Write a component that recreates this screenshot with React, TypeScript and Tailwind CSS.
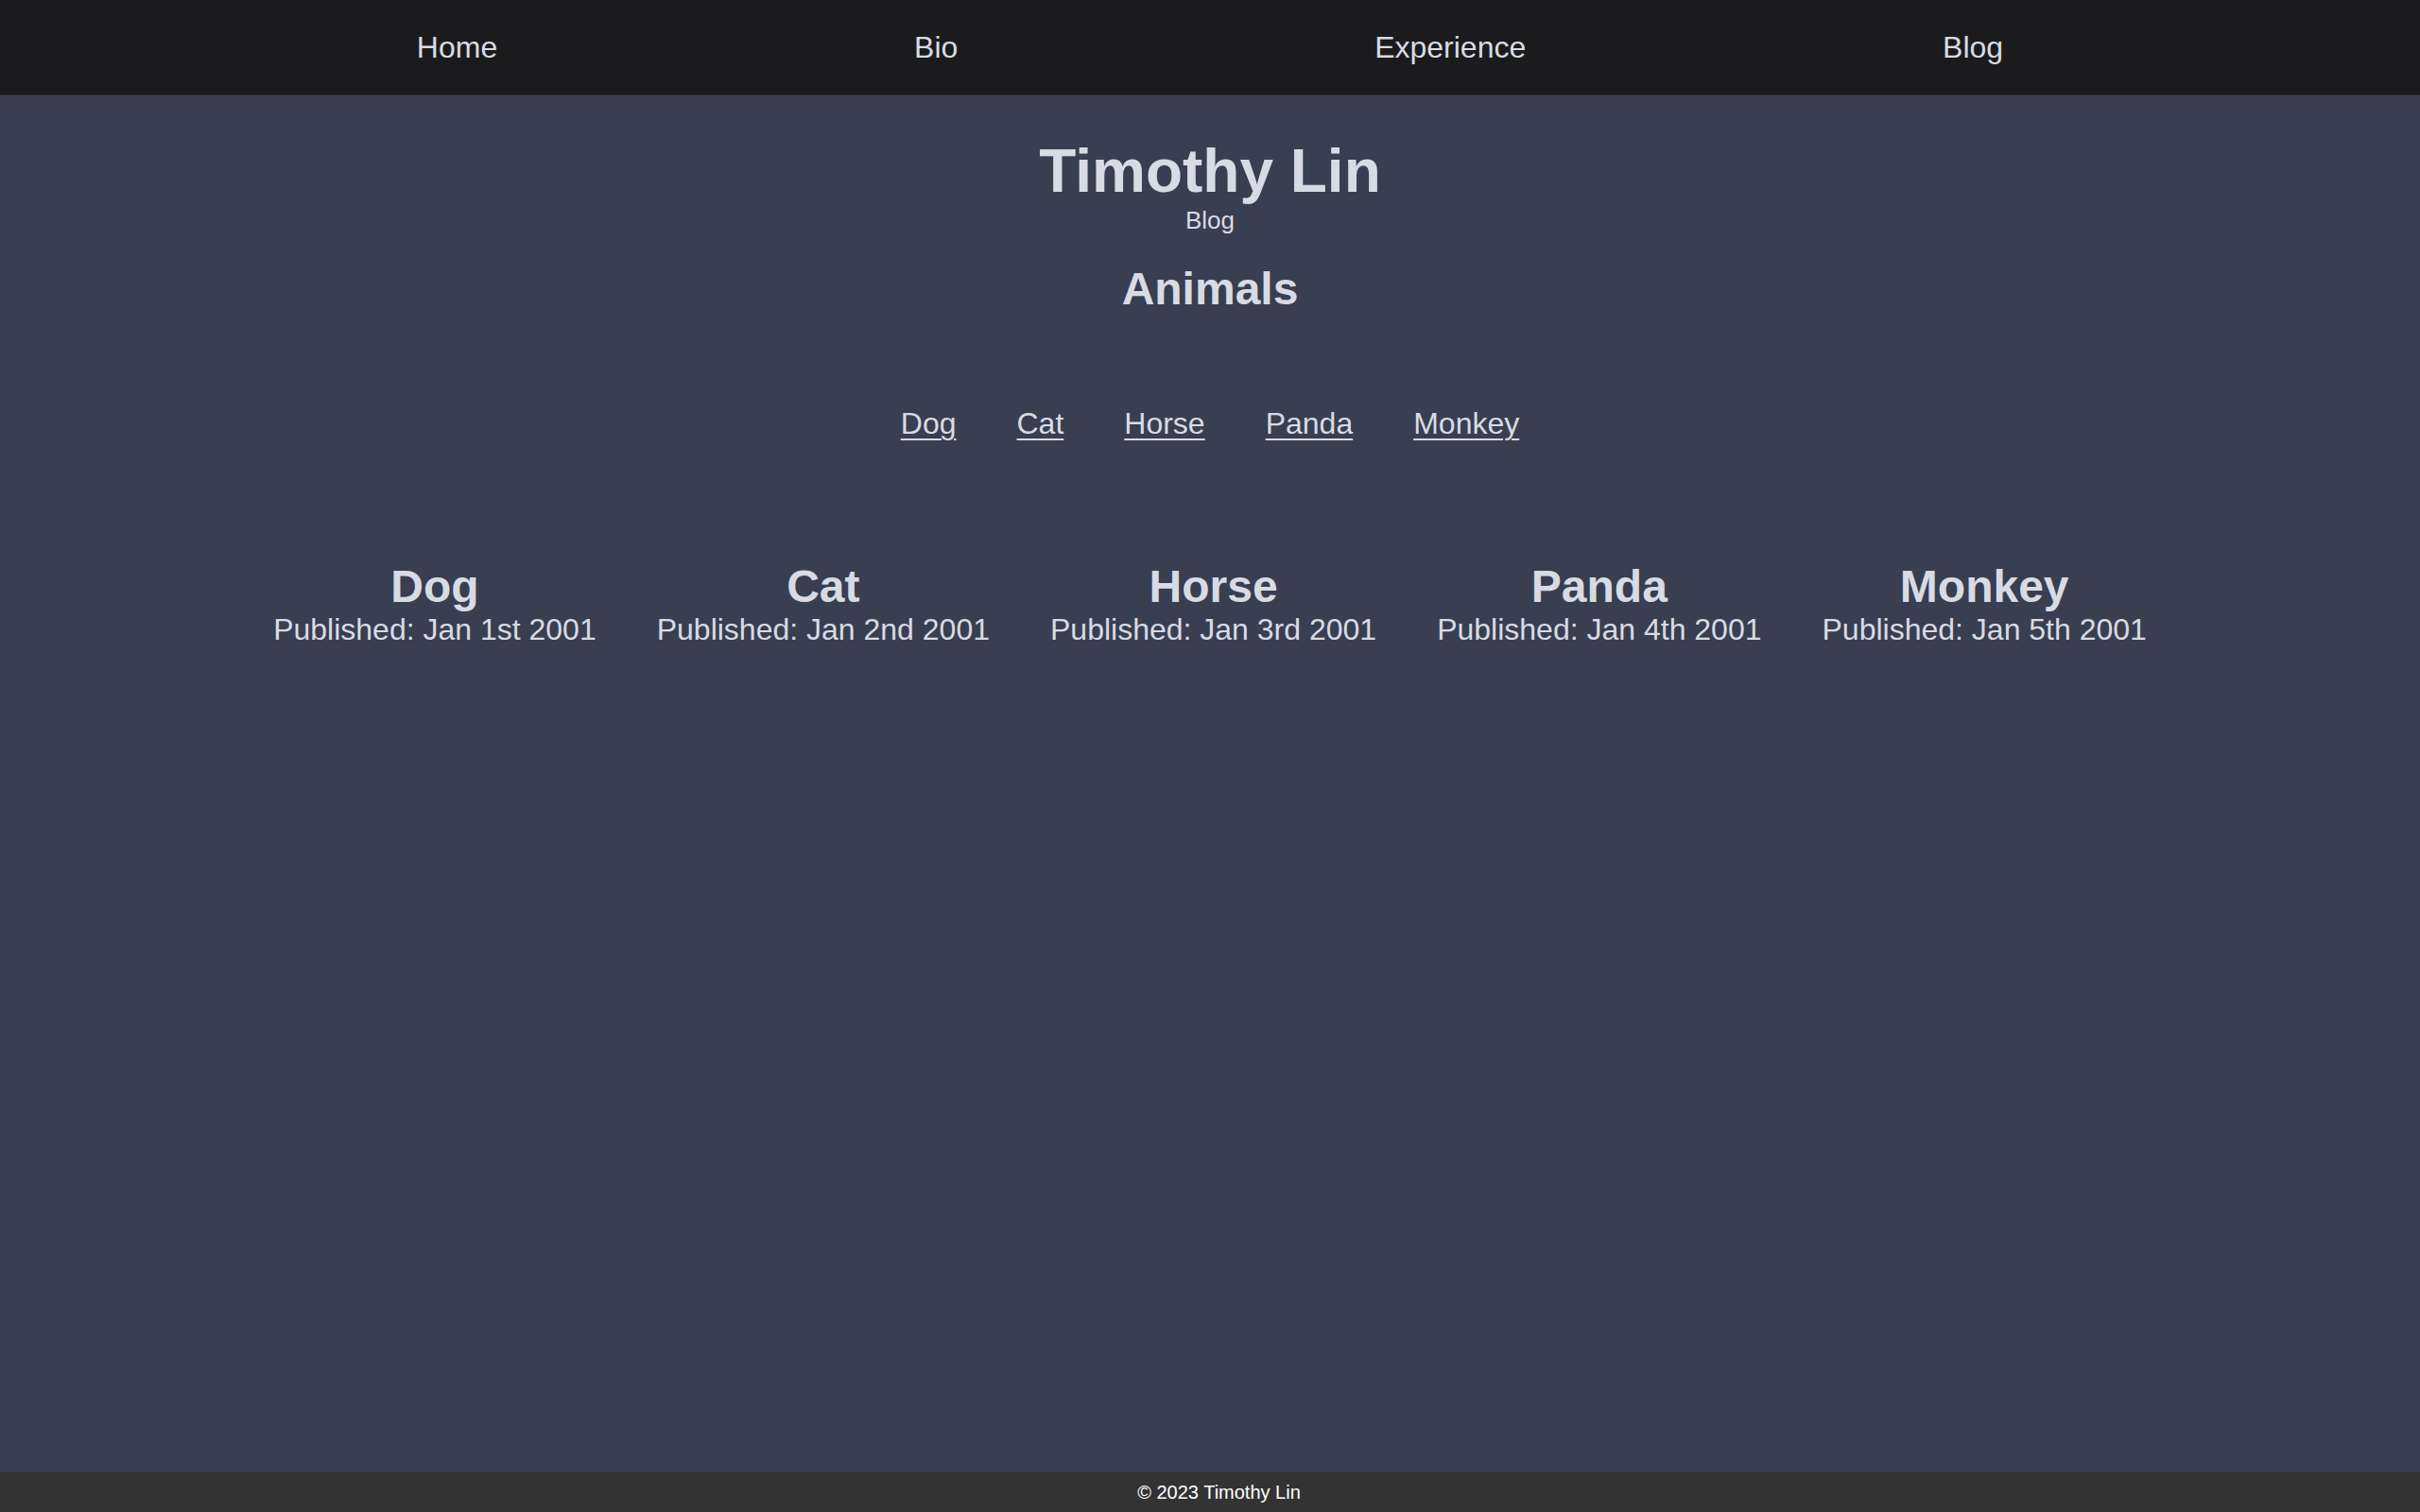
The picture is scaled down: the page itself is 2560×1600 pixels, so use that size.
const navItems = ['Home', 'Bio', 'Experience', 'Blog'];

const posts = [
  { name: 'Dog', date: 'Jan 1st 2001' },
  { name: 'Cat', date: 'Jan 2nd 2001' },
  { name: 'Horse', date: 'Jan 3rd 2001' },
  { name: 'Panda', date: 'Jan 4th 2001' },
  { name: 'Monkey', date: 'Jan 5th 2001' },
];

export default function App() {
  return (
    <div className="min-h-screen flex flex-col bg-[#393e51] text-[#d8dbe3] font-['Liberation_Sans',Arial,sans-serif]">
      {/* Nav */}
      <nav className="h-[101px] flex items-center justify-evenly bg-[#1b1b1d] border-b border-[#2a2b31]">
        {navItems.map((item) => (
          <a key={item} href="#" className="text-[32px] leading-none">
            {item}
          </a>
        ))}
      </nav>

      {/* Main */}
      <main className="flex-1 flex flex-col items-center">
        <h1 className="mt-[48px] text-[64px] font-bold leading-none">Timothy Lin</h1>
        <p className="mt-[7px] text-[26px] leading-none">Blog</p>
        <h2 className="mt-[36px] text-[48px] font-bold leading-none">Animals</h2>

        <div className="mt-[102px] flex gap-[64px]">
          {posts.map((p) => (
            <a key={p.name} href="#" className="text-[32px] leading-none underline underline-offset-[5px] decoration-2">
              {p.name}
            </a>
          ))}
        </div>

        <div className="mt-[133px] flex justify-center gap-[64px]">
          {posts.map((p) => (
            <div key={p.name} className="flex flex-col items-center">
              <h3 className="text-[48px] font-bold leading-none">{p.name}</h3>
              <p className="mt-[5px] text-[32px] leading-none">Published: {p.date}</p>
            </div>
          ))}
        </div>
      </main>

      {/* Footer */}
      <footer className="h-[42px] flex items-center justify-center pl-[19px] bg-[#333333] text-white text-[20px]">
        © 2023 Timothy Lin
      </footer>
    </div>
  );
}
